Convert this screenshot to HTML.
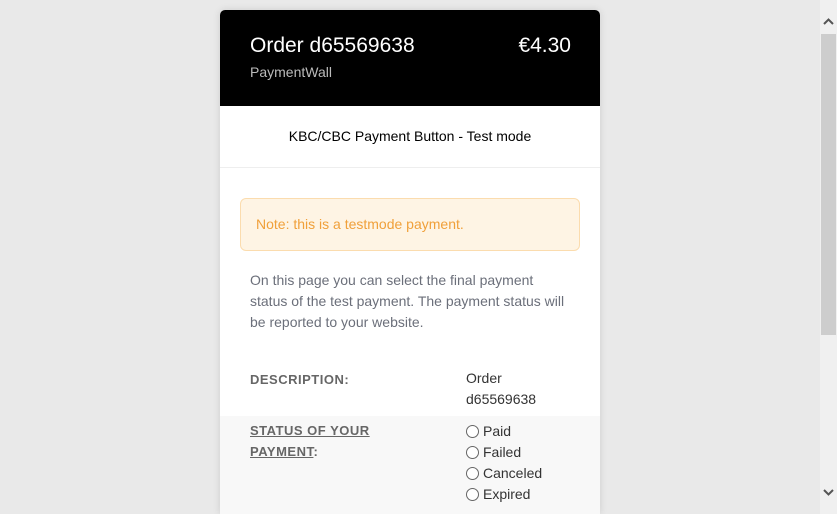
<!DOCTYPE html>
<html><head><meta charset="utf-8"><style>
*{box-sizing:border-box;margin:0;padding:0}
html,body{width:837px;height:514px;overflow:hidden;background:#e9e9e9;font-family:"Liberation Sans",Arial,sans-serif}
.card{position:absolute;left:220px;top:10px;width:380px;height:504px;background:#fff;border-radius:5px 5px 0 0;box-shadow:0 0 8px rgba(0,0,0,.12);overflow:hidden}
.hd{height:96px;background:#000;color:#fff;position:relative}
.t1{position:absolute;left:30px;top:24px;font-size:21px}
.amt{position:absolute;right:29px;top:24px;font-size:21px}
.t2{position:absolute;left:30px;top:54px;font-size:14px;color:#bbb}
.sub{height:62px;border-bottom:1px solid #eee;text-align:center;font-size:14px;line-height:60px;color:#000}
.note{position:absolute;left:20px;top:188px;width:340px;height:53px;background:#fef4e4;border:1px solid #fbdcae;border-radius:6px;color:#f0a03a;font-size:14px;padding-left:15px;line-height:51px}
.p{position:absolute;left:30px;top:260px;width:318px;font-size:14px;line-height:21px;color:#6b6f7a}
.l{position:absolute;font-size:13px;font-weight:bold;color:#666;left:30px;line-height:21px;letter-spacing:0.5px}
.v{position:absolute;left:246px;font-size:14px;line-height:21px;color:#333}
.row2{position:absolute;left:0;top:406px;width:380px;height:100px;background:#f8f8f8}
.r{display:flex;align-items:center}
.r i{display:inline-block;width:13px;height:13px;border:1px solid #666;border-radius:50%;margin-right:4px;background:#fff}
.sb{position:absolute;left:820px;top:0;width:17px;height:514px;background:#f0f0f0}
.th{position:absolute;left:821px;top:34px;width:15px;height:301px;background:#cdcdcd}
</style></head><body>
<div class="card">
<div class="hd"><div class="t1">Order d65569638</div><div class="amt">€4.30</div><div class="t2">PaymentWall</div></div>
<div class="sub">KBC/CBC Payment Button - Test mode</div>
<div class="note">Note: this is a testmode payment.</div>
<div class="p">On this page you can select the final payment status of the test payment. The payment status will be reported to your website.</div>
<div class="l" style="top:359px">DESCRIPTION:</div>
<div class="v" style="top:358px">Order<br>d65569638</div>
<div class="row2"></div>
<div class="l" style="top:410px"><u>STATUS OF YOUR</u><br><u>PAYMENT</u>:</div>
<div class="v" style="top:411px">
<div class="r"><i></i>Paid</div><div class="r"><i></i>Failed</div><div class="r"><i></i>Canceled</div><div class="r"><i></i>Expired</div>
</div>
</div>
<div class="sb"></div><div class="th"></div>
<svg style="position:absolute;left:822px;top:17px" width="13" height="10"><path d="M2 7L6.5 2.5L11 7" stroke="#555" stroke-width="2" fill="none"/></svg>
<svg style="position:absolute;left:822px;top:487px" width="13" height="10"><path d="M2 3L6.5 7.5L11 3" stroke="#555" stroke-width="2" fill="none"/></svg>
</body></html>
